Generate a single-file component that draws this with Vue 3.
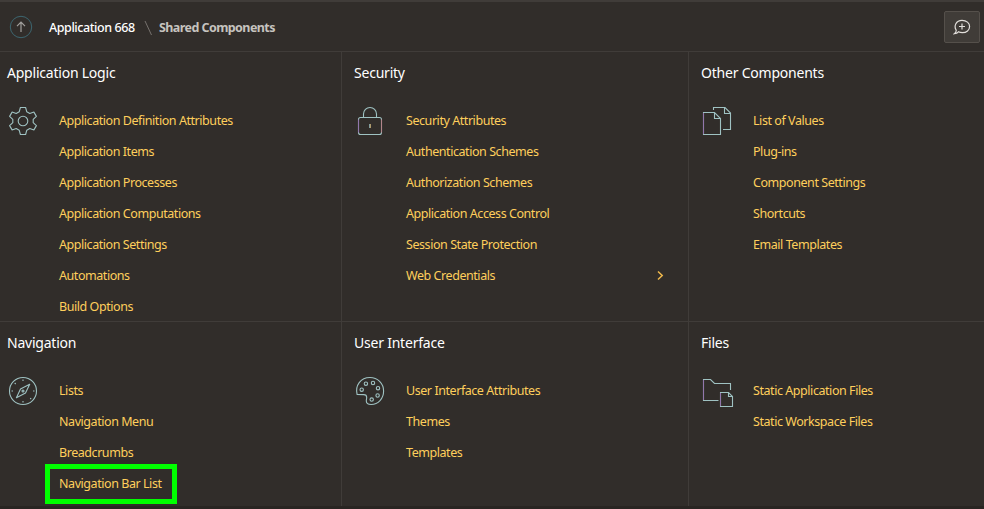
<script setup>
const sections = [
  { title: 'Application Logic', icon: 'gear', links: ['Application Definition Attributes', 'Application Items', 'Application Processes', 'Application Computations', 'Application Settings', 'Automations', 'Build Options'] },
  { title: 'Security', icon: 'lock', links: ['Security Attributes', 'Authentication Schemes', 'Authorization Schemes', 'Application Access Control', 'Session State Protection', 'Web Credentials'], arrow: 'Web Credentials' },
  { title: 'Other Components', icon: 'pages', links: ['List of Values', 'Plug-ins', 'Component Settings', 'Shortcuts', 'Email Templates'] },
  { title: 'Navigation', icon: 'compass', links: ['Lists', 'Navigation Menu', 'Breadcrumbs', 'Navigation Bar List'], highlight: 'Navigation Bar List' },
  { title: 'User Interface', icon: 'palette', links: ['User Interface Attributes', 'Themes', 'Templates'] },
  { title: 'Files', icon: 'folder', links: ['Static Application Files', 'Static Workspace Files'] },
]
</script>

<template>
  <div class="page">
    <header class="bar">
      <svg class="up" width="24" height="24" viewBox="0 0 24 24" fill="none">
        <circle cx="12" cy="12" r="10.7" stroke="#3d6670" />
        <path d="M12 17V7.5M8 11.2L12 7.2L16 11.2" stroke="#a3a19e" stroke-width="1.2" />
      </svg>
      <nav class="crumbs">
        <a class="parent">Application 668</a>
        <svg class="slash" width="10" height="16" viewBox="0 0 10 16"><path d="M1 1L7.5 15" stroke="#77726e" /></svg>
        <span class="current">Shared Components</span>
      </nav>
      <button class="feedback">
        <svg width="18" height="18" viewBox="0 0 18 18" fill="none" stroke="#e2dfdb" stroke-width="1.2">
          <path d="M3.2 12.1C.6 8.2 3 2.3 9 2.3C13.5 2.3 16.6 5 16.6 8.5C16.6 12.1 13.5 14.7 9.4 14.7C7.8 14.7 6.5 14.4 5.4 13.8C4.5 15 3.1 15.6 1.4 15.7C2.7 14.8 3.3 13.5 3.2 12.1Z" />
          <path d="M9 5.5V11.5M6 8.5H12" />
        </svg>
      </button>
    </header>
    <main class="grid">
      <section v-for="s in sections" :key="s.title" class="cell">
        <h2>{{ s.title }}</h2>
        <div class="body">
          <svg class="icon" width="32" height="32" viewBox="0 0 32 32" fill="none" stroke="#9fc2c2" stroke-width="1.1">
            <template v-if="s.icon === 'gear'">
              <path stroke-linejoin="round" d="M13.4 2.5H18.6L19.8 6.8L22.8 8.5L26.9 7.1L29.4 11.4L26.2 14.3V17.7L29.4 20.6L26.9 24.9L22.8 23.5L19.8 25.2L18.6 29.5H13.4L12.2 25.2L9.2 23.5L5.1 24.9L2.6 20.6L5.8 17.7V14.3L2.6 11.4L5.1 7.1L9.2 8.5L12.2 6.8Z" />
              <circle cx="16" cy="16" r="4.8" />
            </template>
            <template v-else-if="s.icon === 'lock'">
              <rect x="4.5" y="12.5" width="23" height="17" rx="2" />
              <path d="M9.5 12.5V9A6.5 6.5 0 0 1 22.5 9V12.5" />
              <path class="side warm" d="M4.5 14.5V27.5" /><path class="side rose" d="M27.5 14.5V27.5" />
              <path d="M16 19V23" stroke-width="1.5" /><path class="key" d="M16.5 19V23" />
            </template>
            <template v-else-if="s.icon === 'pages'">
              <path d="M2.5 7.5H13.5L19.5 13.5V29.5H2.5ZM13.5 7.5V13.5H19.5" />
              <path d="M12.5 5V2.5H24L29.5 8V24.5H22M23.5 2.5V8.5H29.5" />
              <path class="side warm" d="M2.5 8V29" />
            </template>
            <template v-else-if="s.icon === 'compass'">
              <circle cx="16" cy="16" r="13.5" />
              <path d="M22.7 9.2L18.5 17.9L9.4 22.7L13.5 14Z" stroke-linejoin="round" />
              <circle cx="16" cy="16" r="1" />
              <path d="M16 4.5V6M16 26V27.5M4.5 16H6M26 16H27.5M7.7 8L8.7 9M23.2 23.2L24.2 24.2" />
            </template>
            <template v-else-if="s.icon === 'palette'">
              <path d="M3.1 19.5C.9 10.5 6.6 2.5 16 2.5C23.5 2.5 29.6 8.4 29.6 16C29.6 23.6 24.2 29.5 17.2 29.5C14.4 29.5 12.3 28.3 12.3 26C12.3 24.5 12.7 23.8 12.7 22.4C12.7 20.5 11.6 19.6 9.7 19.6Z" stroke-linejoin="round" />
              <circle cx="7.7" cy="14.7" r="1.7" /><circle cx="11.9" cy="8.7" r="1.7" /><circle cx="19" cy="8" r="1.7" /><circle cx="24" cy="13.2" r="1.7" /><circle cx="23.6" cy="20.5" r="1.7" /><circle cx="17.7" cy="24.6" r="1.7" />
            </template>
            <template v-else>
              <path d="M17.5 25.5H2.5V4.5H9.5L13.5 8.5H29.5V15" />
              <path d="M19.5 17.5H27.5L31.5 21.5V31.5H19.5ZM27.5 17.5V21.5H31.5" />
              <path class="side warm" d="M2.5 5V25M19.5 18V31" />
            </template>
          </svg>
          <ul>
            <li v-for="l in s.links" :key="l" :class="{ highlight: s.highlight === l }">
              <a>{{ l }}</a>
              <svg v-if="s.arrow === l" class="chevron" width="8" height="12" viewBox="0 0 8 12" fill="none"><path d="M2 1.5L6.2 5.5L2 9.5" stroke="#efb84c" stroke-width="1.5" /></svg>
            </li>
          </ul>
        </div>
      </section>
    </main>
  </div>
</template>

<style>
body { background: #312d2a; }
</style>

<style scoped>
.page { box-sizing: border-box; width: 984px; height: 509px; overflow: hidden; display: flex; flex-direction: column; background: #312d2a; border-top: 2px solid #403c39; font-family: "Noto Sans", "Open Sans", sans-serif; }
.bar { box-sizing: border-box; flex: none; height: 50px; display: flex; align-items: center; padding: 0 4px 0 9px; border-bottom: 1px solid #403c39; }
.up { flex: none; }
.crumbs { display: flex; align-items: center; height: 20px; margin: 2px auto 0 16px; font-size: 12.5px; line-height: 20px; white-space: nowrap; }
.parent { width: 95px; color: #fff; font-weight: 500; letter-spacing: -0.43px; }
.slash { width: 10px; margin-right: 5px; }
.current { color: #c6c3bf; font-weight: 700; letter-spacing: -0.57px; }
.feedback { box-sizing: border-box; width: 36px; height: 32px; padding: 0; display: flex; align-items: center; justify-content: center; background: #403c38; border: 1px solid #55504b; border-radius: 2px; }
.grid { flex: none; height: 454px; display: grid; grid-template-columns: 341px 347px 296px; grid-template-rows: 269px 185px; border-bottom: 3px solid #292522; }
.cell { box-sizing: border-box; padding: 11px 0 0 12px; border-left: 1px solid #403c39; }
.cell:nth-child(3n + 1) { padding-left: 7px; border-left: 0; }
.cell:nth-child(n + 4) { border-top: 1px solid #403c39; }
h2 { margin: 0; color: #fff; font-size: 14px; line-height: 20px; font-weight: 400; letter-spacing: -0.22px; }
.body { display: flex; padding-top: 22px; }
.icon { flex: none; overflow: visible; }
.side { stroke-width: 1; }
.warm { stroke: #9277ac; }
.rose { stroke: #b2858a; }
.key { stroke: #be9858; stroke-width: 0.7; }
ul { flex: 1; margin: 0; padding: 0 24px 0 20px; list-style: none; }
li { position: relative; display: flex; justify-content: space-between; align-items: center; height: 31px; box-sizing: border-box; color: #ffcf5c; font-size: 12.5px; line-height: 31px; letter-spacing: -0.44px; white-space: nowrap; }
li.highlight::before { content: ""; position: absolute; left: -14px; top: -4px; box-sizing: border-box; width: 132px; height: 40px; border: 5px solid #0f0; }
</style>
